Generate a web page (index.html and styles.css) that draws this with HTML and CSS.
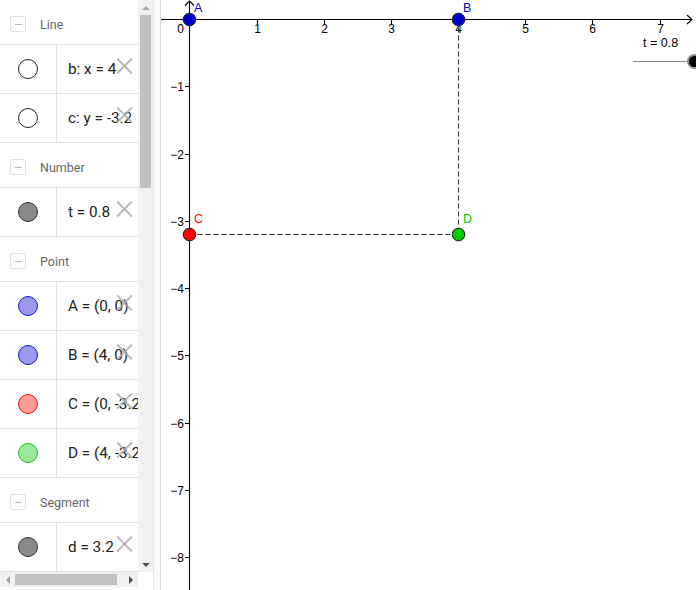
FILE: index.html
```html
<!DOCTYPE html>
<html>
<head>
<meta charset="utf-8">
<link rel="stylesheet" href="styles.css">
</head>
<body>
<div class="app">
  <div class="algebra">
    <div class="algebra-main">
      <div class="algebra-content">
        <div class="group-head"><span class="minus-box"><span class="minus"></span></span><span class="group-title">Line</span></div>
        <div class="item"><div class="marble"><span class="dot dot-line"></span></div><div class="formula"><span class="text">b: x = 4</span><span class="del"></span></div></div>
        <div class="item"><div class="marble"><span class="dot dot-line"></span></div><div class="formula"><span class="text">c: y = -3.2</span><span class="del"></span></div></div>
        <div class="group-head"><span class="minus-box"><span class="minus"></span></span><span class="group-title">Number</span></div>
        <div class="item"><div class="marble"><span class="dot dot-gray"></span></div><div class="formula"><span class="text">t = 0.8</span><span class="del"></span></div></div>
        <div class="group-head"><span class="minus-box"><span class="minus"></span></span><span class="group-title">Point</span></div>
        <div class="item"><div class="marble"><span class="dot dot-blue"></span></div><div class="formula"><span class="text">A = (0, 0)</span><span class="del"></span></div></div>
        <div class="item"><div class="marble"><span class="dot dot-blue"></span></div><div class="formula"><span class="text">B = (4, 0)</span><span class="del"></span></div></div>
        <div class="item"><div class="marble"><span class="dot dot-red"></span></div><div class="formula"><span class="text">C = (0, -3.2)</span><span class="del"></span></div></div>
        <div class="item"><div class="marble"><span class="dot dot-green"></span></div><div class="formula"><span class="text">D = (4, -3.2)</span><span class="del"></span></div></div>
        <div class="group-head"><span class="minus-box"><span class="minus"></span></span><span class="group-title">Segment</span></div>
        <div class="item"><div class="marble"><span class="dot dot-gray"></span></div><div class="formula"><span class="text">d = 3.2</span><span class="del"></span></div></div>
      </div>
      <div class="vscroll">
        <div class="sbtn"><span class="tri tri-up"></span></div>
        <div class="vthumb"></div>
        <div class="vspace"></div>
        <div class="sbtn"><span class="tri tri-down"></span></div>
      </div>
    </div>
    <div class="hscroll-row">
      <div class="hscroll">
        <div class="sbtn"><span class="tri tri-left"></span></div>
        <div class="hthumb"></div>
        <div class="hspace"></div>
        <div class="sbtn"><span class="tri tri-right"></span></div>
      </div>
      <div class="corner"></div>
    </div>
  </div>
  <div class="splitter"></div>
  <div class="graphics">
    <svg class="canvas" width="535" height="590" viewBox="161 0 535 590" xmlns="http://www.w3.org/2000/svg">
      <g stroke="#000" stroke-width="1.1" fill="none">
        <line x1="161" y1="19.5" x2="692" y2="19.5"/>
        <polyline points="687,15 692,19.5 687,24"/>
        <line x1="189.5" y1="1" x2="189.5" y2="590"/>
        <polyline points="185,5.5 189.5,1 194,5.5"/>
        <line x1="257.5" y1="19.5" x2="257.5" y2="24"/>
        <line x1="324.5" y1="19.5" x2="324.5" y2="24"/>
        <line x1="391.5" y1="19.5" x2="391.5" y2="24"/>
        <line x1="458.5" y1="19.5" x2="458.5" y2="24"/>
        <line x1="525.5" y1="19.5" x2="525.5" y2="24"/>
        <line x1="592.5" y1="19.5" x2="592.5" y2="24"/>
        <line x1="660.5" y1="19.5" x2="660.5" y2="24"/>
        <line x1="185" y1="86.5" x2="189.5" y2="86.5"/>
        <line x1="185" y1="154.5" x2="189.5" y2="154.5"/>
        <line x1="185" y1="221.5" x2="189.5" y2="221.5"/>
        <line x1="185" y1="288.5" x2="189.5" y2="288.5"/>
        <line x1="185" y1="355.5" x2="189.5" y2="355.5"/>
        <line x1="185" y1="423.5" x2="189.5" y2="423.5"/>
        <line x1="185" y1="490.5" x2="189.5" y2="490.5"/>
        <line x1="185" y1="557.5" x2="189.5" y2="557.5"/>
      </g>
      <g class="axis-label" text-anchor="middle">
        <text x="180.5" y="33">0</text>
        <text x="257.5" y="33">1</text>
        <text x="324.5" y="33">2</text>
        <text x="391.5" y="33">3</text>
        <text x="458.5" y="33">4</text>
        <text x="525.5" y="33">5</text>
        <text x="592.5" y="33">6</text>
        <text x="660.5" y="33">7</text>
      </g>
      <g class="axis-label" text-anchor="end">
        <text x="184" y="90.5">−1</text>
        <text x="184" y="158.5">−2</text>
        <text x="184" y="225.5">−3</text>
        <text x="184" y="292.5">−4</text>
        <text x="184" y="359.5">−5</text>
        <text x="184" y="427.5">−6</text>
        <text x="184" y="494.5">−7</text>
        <text x="184" y="561.5">−8</text>
      </g>
      <g stroke="#333" stroke-width="1" stroke-dasharray="5 3" fill="none">
        <line x1="458.5" y1="19.5" x2="458.5" y2="234.5"/>
        <line x1="189.5" y1="234.5" x2="458.5" y2="234.5"/>
      </g>
      <circle cx="189.5" cy="19.5" r="6.3" fill="#0000cc" stroke="#1a1a1a"/>
      <circle cx="458.5" cy="19.5" r="6.3" fill="#0000cc" stroke="#1a1a1a"/>
      <circle cx="189.5" cy="234.5" r="6.3" fill="#ff0000" stroke="#1a1a1a"/>
      <circle cx="458.5" cy="234.5" r="6.3" fill="#00cc00" stroke="#1a1a1a"/>
      <text class="pt-label" x="194" y="12" fill="#0000cc">A</text>
      <text class="pt-label" x="463" y="12" fill="#0000cc">B</text>
      <text class="pt-label" x="194" y="223" fill="#ff0000">C</text>
      <text class="pt-label" x="463" y="223" fill="#00cc00">D</text>
      <text class="slider-label" x="643" y="47">t = 0.8</text>
      <line x1="633" y1="61.5" x2="688" y2="61.5" stroke="#888" stroke-width="1"/>
      <circle cx="694.5" cy="61.5" r="7.5" fill="#8f8f8f"/>
      <circle cx="694.5" cy="61.5" r="5.5" fill="#000"/>
    </svg>
  </div>
</div>
</body>
</html>
```
FILE: styles.css
```css
html, body {
  margin: 0;
  padding: 0;
  background: #fff;
}
body {
  width: 696px;
  height: 590px;
  overflow: hidden;
  font-family: Roboto, "Liberation Sans", sans-serif;
}
.app {
  display: flex;
  width: 696px;
  height: 590px;
}
.algebra {
  width: 153px;
  display: flex;
  flex-direction: column;
  flex: none;
}
.algebra-main {
  display: flex;
  height: 572px;
}
.algebra-content {
  width: 138px;
  overflow: hidden;
}
.group-head {
  height: 44px;
  border-bottom: 1px solid #e0e0e0;
  display: flex;
  align-items: center;
  padding-left: 10px;
  box-sizing: content-box;
}
.minus-box {
  width: 14px;
  height: 14px;
  border: 1px solid #e0e0e0;
  border-radius: 2px;
  display: flex;
  align-items: center;
  justify-content: center;
  margin-top: 4px;
}
.minus {
  width: 7px;
  height: 1px;
  background: #bbb;
}
.group-title {
  margin-left: 14px;
  margin-top: 4px;
  font-size: 12.5px;
  color: #666;
}
.item {
  height: 48px;
  border-bottom: 1px solid #e0e0e0;
  display: flex;
}
.marble {
  width: 56px;
  display: flex;
  align-items: center;
  justify-content: center;
  border-right: 1px solid #e0e0e0;
  flex: none;
}
.dot {
  width: 18px;
  height: 18px;
  border-radius: 50%;
  border: 1px solid #222;
  box-sizing: content-box;
}
.dot-line { background: #fff; }
.dot-gray { background: #8a8a8a; border-color: #333; }
.dot-blue { background: #9999ee; border-color: #1818c8; }
.dot-red { background: #ff9a9a; border-color: #e01010; }
.dot-green { background: #9ae89a; border-color: #20c020; }
.formula {
  position: relative;
  flex: 1;
  display: flex;
  align-items: center;
  padding-left: 11px;
  white-space: nowrap;
  overflow: hidden;
}
.text {
  font-size: 15.3px;
  color: #222;
}
.del {
  position: absolute;
  left: 59px;
  top: 12px;
  width: 17px;
  height: 17px;
}
.del::before, .del::after {
  content: "";
  position: absolute;
  left: -2px;
  top: 7.5px;
  width: 21px;
  height: 2px;
  background: rgba(170, 170, 170, 0.8);
  transform: rotate(45deg);
}
.del::after {
  transform: rotate(-45deg);
}
.vscroll {
  width: 15px;
  background: #f1f1f1;
  display: flex;
  flex-direction: column;
  align-items: center;
}
.sbtn {
  width: 15px;
  height: 15px;
  display: flex;
  align-items: center;
  justify-content: center;
  flex: none;
}
.vthumb {
  width: 11px;
  height: 173px;
  background: #c1c1c1;
}
.vspace { flex: 1; }
.hspace { flex: 1; }
.tri {
  width: 0;
  height: 0;
}
.tri-up {
  border-left: 4px solid transparent;
  border-right: 4px solid transparent;
  border-bottom: 4px solid #a3a3a3;
}
.tri-down {
  border-left: 4px solid transparent;
  border-right: 4px solid transparent;
  border-top: 4px solid #505050;
}
.tri-left {
  border-top: 4px solid transparent;
  border-bottom: 4px solid transparent;
  border-right: 4px solid #a3a3a3;
}
.tri-right {
  border-top: 4px solid transparent;
  border-bottom: 4px solid transparent;
  border-left: 4px solid #505050;
}
.hscroll-row {
  display: flex;
  height: 18px;
}
.hscroll {
  width: 138px;
  height: 15px;
  background: #f1f1f1;
  display: flex;
  align-items: center;
}
.hthumb {
  width: 102px;
  height: 11px;
  background: #c1c1c1;
}
.corner {
  width: 15px;
}
.splitter {
  width: 6px;
  flex: none;
  border-left: 1px solid #e6e6e6;
  border-right: 1px solid #d6d6d6;
  background: #fafafa;
}
.graphics {
  flex: 1;
  overflow: hidden;
}
.canvas {
  display: block;
}
.axis-label {
  font-family: "Liberation Sans", Arial, sans-serif;
  font-size: 12px;
  fill: #000;
}
.slider-label {
  font-family: "Liberation Sans", Arial, sans-serif;
  font-size: 12.5px;
  fill: #000;
}
.pt-label {
  font-family: "Liberation Sans", Arial, sans-serif;
  font-size: 12.5px;
}
```
